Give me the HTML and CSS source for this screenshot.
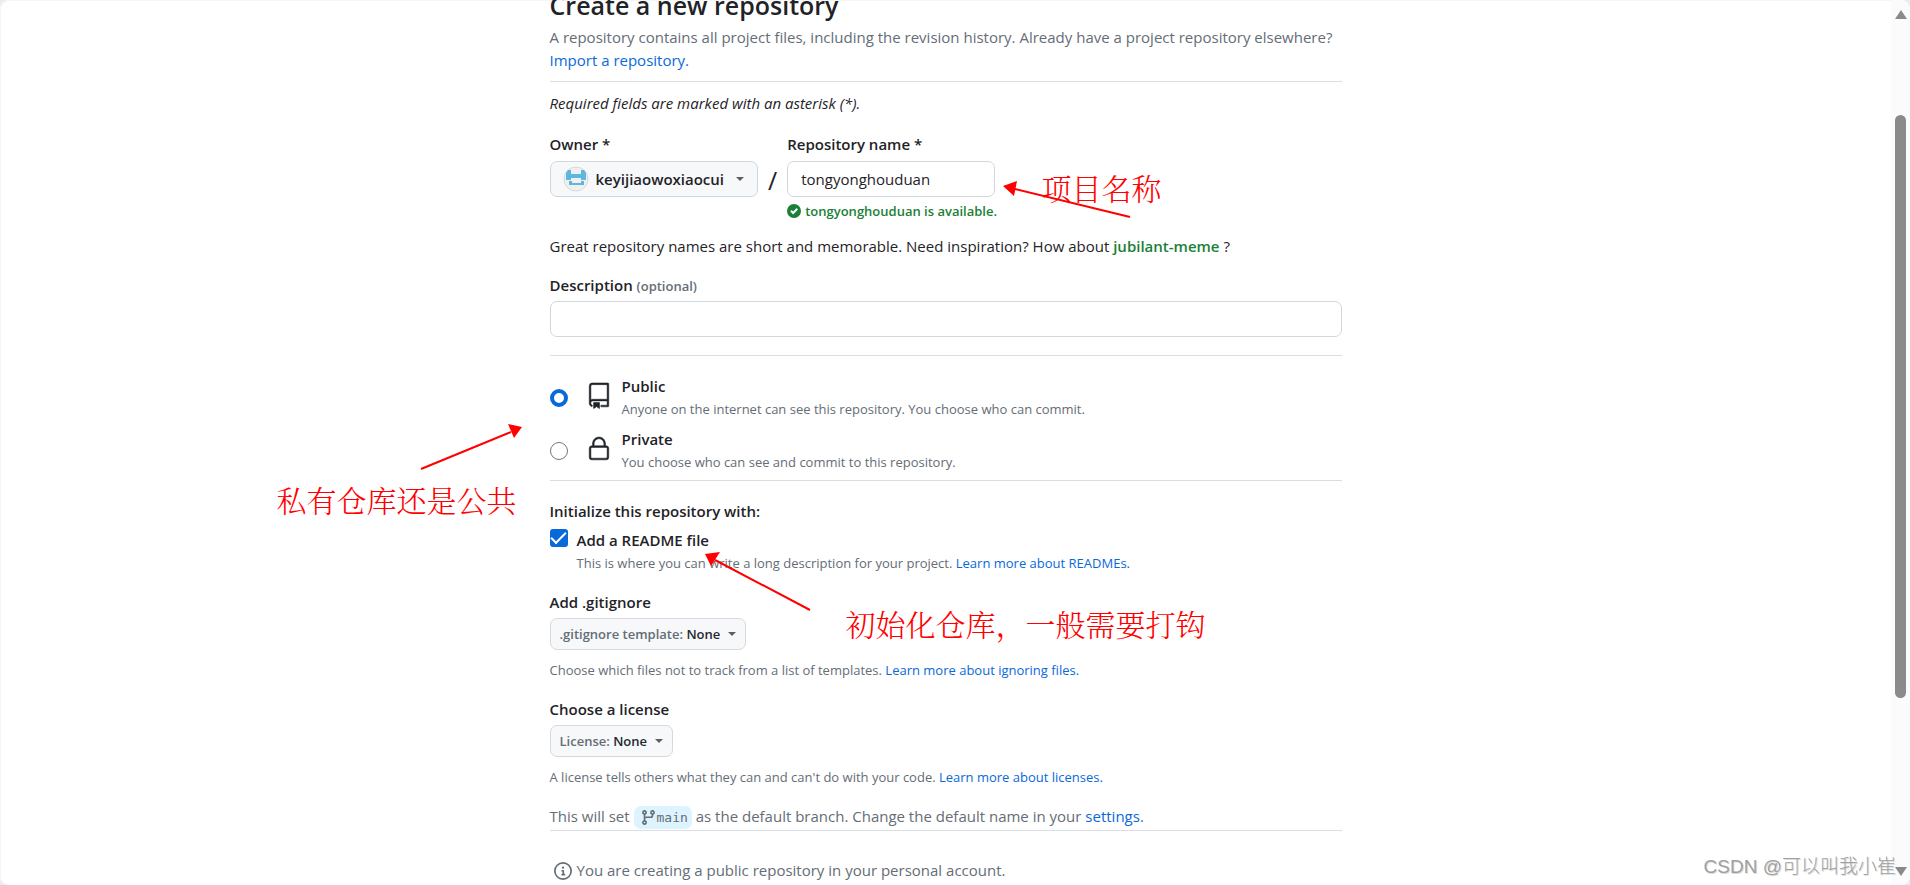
FILE: index.html
```html
<!DOCTYPE html>
<html lang="en">
<head>
<meta charset="utf-8">
<title>Create a new repository</title>
<link rel="stylesheet" href="styles.css">
</head>
<body>
<div class="window">
  <main class="content">
    <div class="column">
      <form class="form">
        <header class="intro">
          <h1 class="title">Create a new repository</h1>
          <p class="muted">A repository contains all project files, including the revision history. Already have a project repository elsewhere? <a href="#">Import a repository.</a></p>
        </header>
        <p class="required">Required fields are marked with an asterisk (*).</p>

        <div class="names">
          <div class="field">
            <label class="label" for="owner">Owner *</label>
            <button class="owner" id="owner" type="button" aria-haspopup="true">
              <svg class="avatar" viewBox="0 0 26 26" aria-hidden="true">
                <circle cx="13" cy="13" r="12" fill="#f0f0f0" stroke="#d5d9dd"/>
                <path fill="#5cb6dd" d="M5 4h3v4h10V4h3l2 3v7h-5v-2H8v2H3V7zM6 15h3v2h9v-2h3v4H6z"/>
              </svg>
              <span>keyijiaowoxiaocui</span>
              <span class="caret"></span>
            </button>
          </div>
          <span class="slash">/</span>
          <div class="field">
            <label class="label" for="repo">Repository name *</label>
            <input class="text repo" id="repo" type="text" value="tongyonghouduan">
            <p class="available">
              <svg class="ok" viewBox="0 0 12 12" aria-hidden="true"><path fill="currentColor" d="M6 0a6 6 0 1 1 0 12A6 6 0 0 1 6 0zm-.7 8.900 4.100-4.200-1.200-1.200-2.900 3-1.300-1.300L2.800 6.400z"/></svg>
              tongyonghouduan is available.
            </p>
          </div>
        </div>

        <p class="hint">Great repository names are short and memorable. Need inspiration? How about <strong class="suggestion">jubilant-meme</strong> ?</p>

        <div class="field description">
          <label class="label" for="desc">Description <span class="optional">(optional)</span></label>
          <input class="text" id="desc" type="text">
        </div>

        <div class="visibility">
          <div class="choice">
            <input class="radio" type="radio" name="visibility" id="public" checked>
            <svg class="big-icon" viewBox="0 0 24 24" aria-hidden="true"><path fill="currentColor" d="M3 2.750A2.750 2.750 0 0 1 5.750 0h14.500a.750.750 0 0 1 .750.750v20.500a.750.750 0 0 1-.750.750h-6a.750.750 0 0 1 0-1.500h5.250v-4H6A1.500 1.500 0 0 0 4.500 18v.750c0 .716.430 1.334 1.050 1.605a.750.750 0 0 1-.600 1.374A3.251 3.251 0 0 1 3 18.750ZM19.500 1.500H5.750c-.690 0-1.250.560-1.250 1.250v12.651A2.989 2.989 0 0 1 6 15h13.500Z"/><path fill="currentColor" d="M7 18.250a.250.250 0 0 1 .250-.250h5a.250.250 0 0 1 .250.250v5.010a.250.250 0 0 1-.397.201l-2.206-1.604a.250.250 0 0 0-.294 0L7.397 23.460a.250.250 0 0 1-.397-.200v-5.010Z"/></svg>
            <label for="public"><span class="label">Public</span><span class="note">Anyone on the internet can see this repository. You choose who can commit.</span></label>
          </div>
          <div class="choice">
            <input class="radio" type="radio" name="visibility" id="private">
            <svg class="big-icon" viewBox="0 0 24 24" aria-hidden="true"><path fill="currentColor" d="M6 9V7.250C6 3.845 8.503 1 12 1s6 2.845 6 6.250V9h.500a2.500 2.500 0 0 1 2.500 2.500v8a2.500 2.500 0 0 1-2.500 2.500h-13A2.500 2.500 0 0 1 3 19.500v-8A2.500 2.500 0 0 1 5.500 9Zm-1.500 2.500v8a1 1 0 0 0 1 1h13a1 1 0 0 0 1-1v-8a1 1 0 0 0-1-1h-13a1 1 0 0 0-1 1Zm3-4.250V9h9V7.250c0-2.670-1.922-4.750-4.500-4.750-2.578 0-4.500 2.080-4.500 4.750Z"/></svg>
            <label for="private"><span class="label">Private</span><span class="note">You choose who can see and commit to this repository.</span></label>
          </div>
        </div>

        <h2 class="label initialize">Initialize this repository with:</h2>
        <div class="readme">
          <input class="check" type="checkbox" id="readme" checked>
          <div>
            <label class="label" for="readme">Add a README file</label>
            <p class="note">This is where you can write a long description for your project. <a href="#">Learn more about READMEs.</a></p>
          </div>
        </div>

        <section class="option">
          <h2 class="label">Add .gitignore</h2>
          <button class="picker" type="button" aria-haspopup="true"><span>.gitignore template: <b>None</b></span><span class="caret"></span></button>
          <p class="note">Choose which files not to track from a list of templates. <a href="#">Learn more about ignoring files.</a></p>
        </section>

        <section class="option">
          <h2 class="label">Choose a license</h2>
          <button class="picker" type="button" aria-haspopup="true"><span>License: <b>None</b></span><span class="caret"></span></button>
          <p class="note">A license tells others what they can and can't do with your code. <a href="#">Learn more about licenses.</a></p>
        </section>

        <p class="branch-line muted">This will set <span class="branch"><svg class="branch-icon" viewBox="0 0 16 16" aria-hidden="true"><path fill="currentColor" d="M9.500 3.250a2.250 2.250 0 1 1 3 2.122V6A2.500 2.500 0 0 1 10 8.500H6a1 1 0 0 0-1 1v1.128a2.251 2.251 0 1 1-1.500 0V5.372a2.250 2.250 0 1 1 1.500 0v1.836A2.493 2.493 0 0 1 6 7h4a1 1 0 0 0 1-1v-.628A2.250 2.250 0 0 1 9.500 3.250Zm-6 0a.750.750 0 1 0 1.500 0 .750.750 0 0 0-1.500 0Zm8.250-.750a.750.750 0 1 0 0 1.500.750.750 0 0 0 0-1.500ZM4.250 12a.750.750 0 1 0 0 1.500.750.750 0 0 0 0-1.500Z"/></svg>main</span> as the default branch. Change the default name in your <a href="#">settings</a>.</p>

        <p class="account muted">
          <svg class="info" viewBox="0 0 16 16" aria-hidden="true"><path fill="currentColor" d="M0 8a8 8 0 1 1 16 0A8 8 0 0 1 0 8Zm8-6.500a6.500 6.500 0 1 0 0 13 6.500 6.500 0 0 0 0-13ZM6.500 7.750A.750.750 0 0 1 7.250 7h1a.750.750 0 0 1 .750.750v2.750h.250a.750.750 0 0 1 0 1.500h-2a.750.750 0 0 1 0-1.500h.250v-2h-.250a.750.750 0 0 1-.750-.750ZM8 6a1 1 0 1 1 0-2 1 1 0 0 1 0 2Z"/></svg>
          <span>You are creating a public repository in your personal account.</span>
        </p>
      </form>

      <svg class="arrows" aria-hidden="true">
        <g stroke="#f00" stroke-width="2" fill="#f00">
          <path d="M580 217 465 189"/><path stroke="none" d="M453 186l14-5-3 15z"/>
          <path d="M-129 469l90-37"/><path stroke="none" d="M-28 427l-14-3 6 14z"/>
          <path d="M260 610 165 560"/><path stroke="none" d="M155 554l15-2-9 14z"/>
        </g>
      </svg>
      <span class="mark mark-name">项目名称</span>
      <span class="mark mark-visibility">私有仓库还是公共</span>
      <span class="mark mark-readme">初始化仓库，一般需要打钩</span>
    </div>
  </main>
  <div class="scrollbar" aria-hidden="true">
    <span class="arrow-up"></span>
    <div class="track"><div class="thumb"></div></div>
    <span class="arrow-down"></span>
  </div>
  <span class="watermark">CSDN @可以叫我小崔</span>
</div>
</body>
</html>
```
FILE: styles.css
```css
* { box-sizing: border-box; }

body {
  margin: 0;
  background: #ececec;
  color: #1f2328;
  font: 15px/23px "Open Sans", "Noto Sans", "Noto Sans CJK SC", sans-serif;
}

h1, h2, p { margin: 0; }
a { color: #0969da; text-decoration: none; }
button, input { font: inherit; color: inherit; }

.window {
  position: relative;
  display: flex;
  height: 100vh;
  overflow: hidden;
  border-radius: 9px;
  background: #fff;
  box-shadow: inset 1px 1px 0 #f6f6f6;
}
.content {
  flex: 1;
  display: flex;
  justify-content: center;
}
.column {
  position: relative;
  width: 100%;
  max-width: 792px;
}

.form {
  display: flex;
  flex-direction: column;
  margin-top: -13px;
}
.muted { color: #656d76; }
.intro { padding-bottom: 9px; border-bottom: 1px solid #d8dee4; }
.title { font-size: 25px; line-height: 36px; font-weight: 600; padding-bottom: 3px; }
.required { margin-top: 10px; font-style: italic; }

.label { display: block; font-size: 15px; line-height: 23px; font-weight: 600; }
.field .label { margin-bottom: 5px; }
.names { display: flex; margin-top: 18px; }
.owner {
  display: flex;
  align-items: center;
  gap: 7px;
  height: 36px;
  padding: 0 13px 0 12px;
  border: 1px solid #d0d7de;
  border-radius: 7px;
  background: #f6f8fa;
  font-weight: 600;
}
.avatar { width: 26px; height: 26px; }
.caret {
  border: 4px solid transparent;
  border-top-color: #57606a;
  border-bottom: 0;
}
.owner .caret { margin-left: 5px; }
.slash { align-self: flex-start; margin: 32px 10px 0; font-size: 25px; line-height: 30px; }
.text {
  width: 100%;
  height: 36px;
  padding: 0 13px;
  border: 1px solid #d0d7de;
  border-radius: 7px;
  background: #fff;
}
.repo { display: block; width: 208px; }
.available {
  display: flex;
  align-items: center;
  gap: 4px;
  margin-top: 4px;
  color: #1a7f37;
  font-size: 13px;
  line-height: 20px;
  font-weight: 600;
}
.ok { width: 14px; height: 14px; }
.hint { margin-top: 14px; }
.suggestion { font-weight: 600; color: #1a7f37; }
.description { margin-top: 16px; }
.description .label { margin-bottom: 3px; }
.optional { color: #656d76; font-size: 13px; }

.visibility {
  display: flex;
  flex-direction: column;
  gap: 8px;
  margin-top: 18px;
  padding: 19px 0 7px;
  border: 1px solid #d8dee4;
  border-width: 1px 0;
}
.choice { display: flex; align-items: center; }
.note { display: block; color: #656d76; font-size: 13px; line-height: 22px; }
.radio, .check { appearance: none; flex: none; width: 18px; height: 18px; margin: 0; }
.radio { border: 1px solid #6e7781; border-radius: 50%; }
.radio:checked { border: 4px solid #0969da; }
.big-icon {
  flex: none;
  width: 26px;
  height: 26px;
  margin: 0 10px 4px 18px;
  overflow: visible;
  stroke: currentColor;
  stroke-width: 0.5;
}

.initialize { margin-top: 19px; }
.readme { display: flex; gap: 9px; margin-top: 6px; }
.check {
  border-radius: 3px;
  background: #0969da;
  display: grid;
  place-items: center;
}
.check::before {
  content: "";
  width: 13px;
  height: 6px;
  margin-bottom: 4px;
  border: solid #fff;
  border-width: 0 0 2px 2px;
  transform: rotate(-45deg);
}
.option { margin-top: 17px; }
.picker {
  display: flex;
  align-items: center;
  gap: 8px;
  height: 32px;
  margin: 4px 0 9px;
  padding: 0 9px;
  border: 1px solid #d5d9dd;
  border-radius: 7px;
  background: #f6f8fa;
  color: #656d76;
  font-size: 13px;
  font-weight: 600;
}
.picker b { font-weight: 600; color: #24292f; }
.branch-line {
  margin-top: 17px;
  padding-bottom: 1px;
  border-bottom: 1px solid #d8dee4;
}
.branch {
  display: inline-flex;
  align-items: center;
  vertical-align: middle;
  padding: 0 4px 0 6px;
  border-radius: 7px;
  background: #ddf4ff;
  font: 13px/23px "DejaVu Sans Mono", monospace;
}
.branch-icon { width: 17px; height: 17px; }
.account { display: flex; align-items: center; gap: 5px; margin-top: 28px; padding-left: 4px; }
.info { width: 18px; height: 18px; }

/* Hand-drawn notes lie over the form */
.arrows {
  position: absolute;
  top: 0;
  left: 0;
  width: 100%;
  height: 100%;
  overflow: visible;
  pointer-events: none;
}
.mark {
  position: absolute;
  color: #f00;
  font: 300 30px/36px "Noto Serif CJK SC", "Noto Sans CJK SC", serif;
  white-space: nowrap;
}
.mark-name { left: 492px; top: 169px; }
.mark-visibility { left: -273px; top: 481px; }
.mark-readme { left: 296px; top: 605px; }

.scrollbar {
  width: 19px;
  display: flex;
  flex-direction: column;
  align-items: center;
  padding: 10px 0 9px;
  background: #fbfbfb;
}
.track { flex: 1; width: 11px; padding-top: 96px; }
.thumb { height: 77.5%; border-radius: 6px; background: #8a8a8a; }
.arrow-up, .arrow-down { border: 6px solid transparent; }
.arrow-up { border-top: 0; border-bottom: 9px solid #8a8a8a; }
.arrow-down { border-bottom: 0; border-top: 9px solid #8a8a8a; }
.watermark {
  position: absolute;
  right: 14px;
  bottom: 4px;
  color: #a0a0a0;
  font: 300 19px/28px "Liberation Sans", "Noto Sans CJK SC", sans-serif;
  text-shadow: 1px 1px 0 #ddd;
}
```
